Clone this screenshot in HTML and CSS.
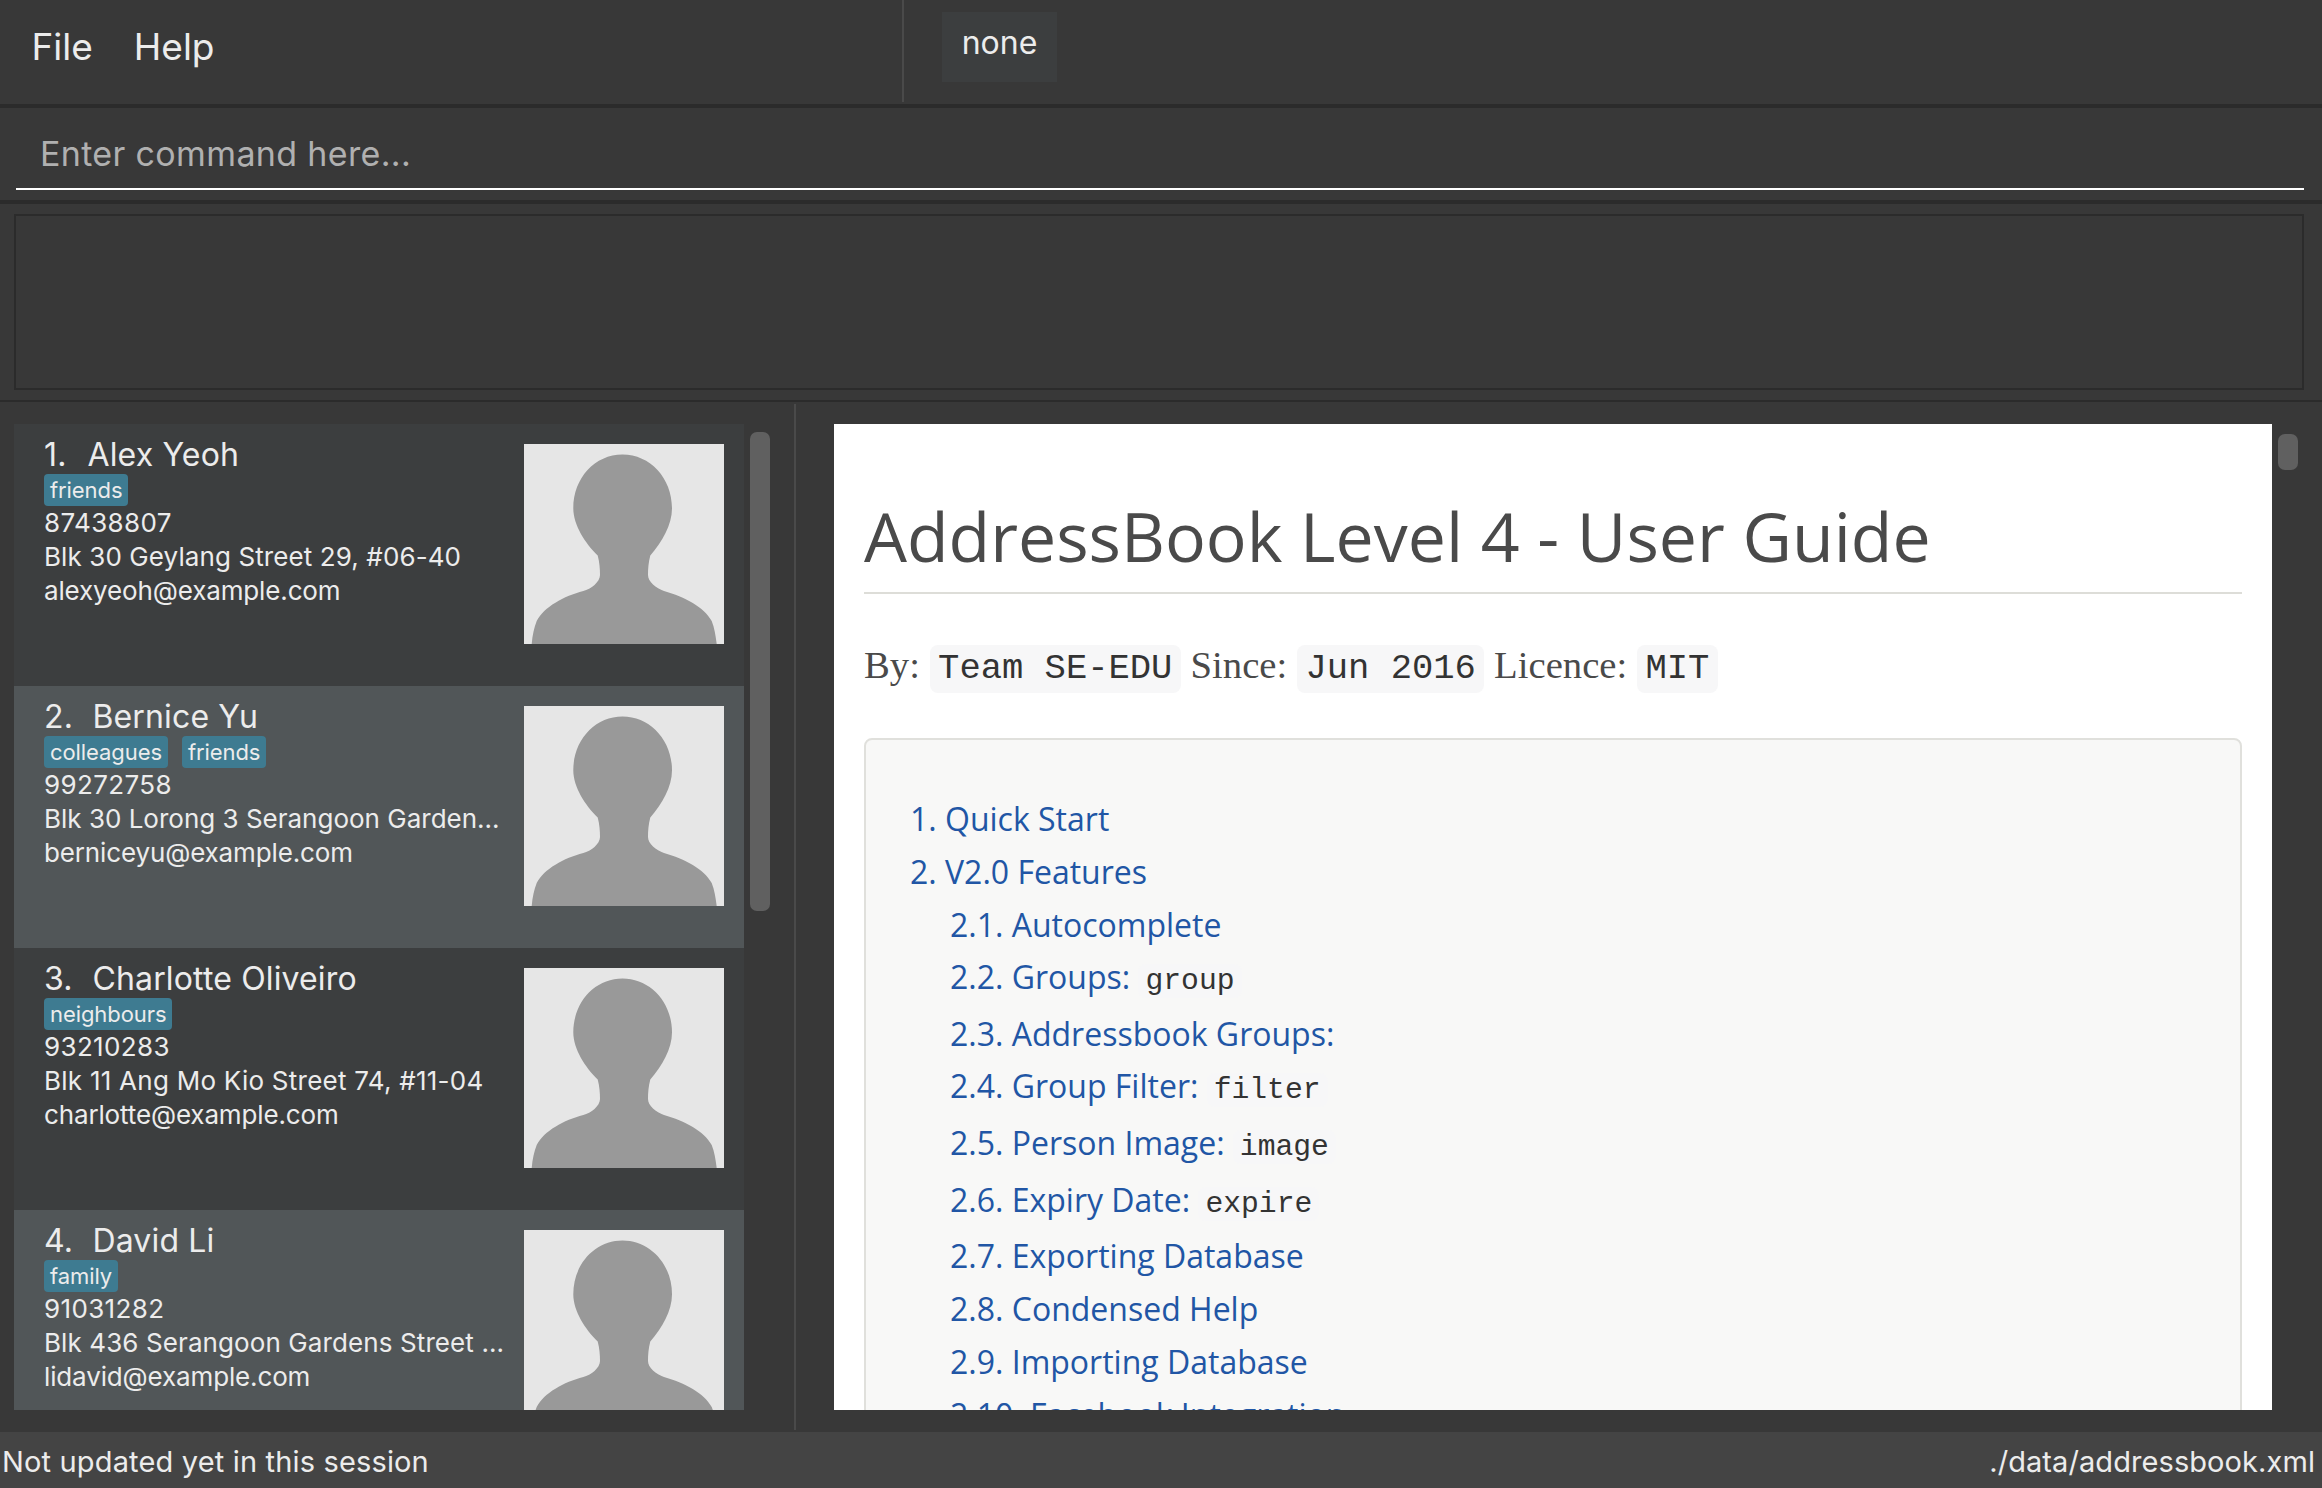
FILE: index.html
```html
<!DOCTYPE html>
<html lang="en">
<head>
<meta charset="utf-8">
<title>Address Book</title>
<link rel="stylesheet" href="styles.css">
</head>
<body>
<svg class="defs" width="0" height="0" aria-hidden="true">
  <symbol id="person" viewBox="0 0 200 200">
    <rect width="200" height="200" fill="#e6e6e6"/>
    <path fill="#999" d="M98.500 10.500C71 10.500 49.300 34 49.300 64.300C49.300 81 61 99 73.700 111.500C75.500 118 76 125 76 131C76 138 67 145 59.300 147C40 152 20 163 12.700 177C10 184 8.500 191 7.700 200H192.700C191.500 191 190.500 184 187.700 177C180 163 161 153 140 147C132 144 124 138 124 131C124 125 124.500 118 126.300 111.500C138 98 148 81 148 64.300C148 34 126 10.500 98.500 10.500Z"/>
  </symbol>
</svg>
<div class="app">
  <header class="topbar">
    <nav class="menu"><span class="menu-item">File</span><span class="menu-item menu-help">Help</span></nav>
    <div class="groups"><button class="group">none</button></div>
  </header>
  <section class="command"><div class="command-field"><span>Enter command here...</span></div></section>
  <section class="result"><div class="result-box"></div></section>
  <main class="main">
    <section class="list-pane">
      <div class="list">
        <article class="card">
          <div class="info"><h2 class="name"><span class="idx first">1.</span><span>Alex Yeoh</span></h2>
          <div class="tags"><span class="tag">friends</span></div>
          <p class="phone">87438807</p><p class="address">Blk 30 Geylang Street 29, #06-40</p><p class="email">alexyeoh@example.com</p></div>
          <svg class="photo"><use href="#person"/></svg>
        </article>
        <article class="card alt">
          <div class="info"><h2 class="name"><span class="idx">2.</span><span>Bernice Yu</span></h2>
          <div class="tags"><span class="tag">colleagues</span><span class="tag">friends</span></div>
          <p class="phone">99272758</p><p class="address long">Blk 30 Lorong 3 Serangoon Garden...</p><p class="email">berniceyu@example.com</p></div>
          <svg class="photo"><use href="#person"/></svg>
        </article>
        <article class="card">
          <div class="info"><h2 class="name"><span class="idx">3.</span><span>Charlotte Oliveiro</span></h2>
          <div class="tags"><span class="tag">neighbours</span></div>
          <p class="phone">93210283</p><p class="address wide">Blk 11 Ang Mo Kio Street 74, #11-04</p><p class="email">charlotte@example.com</p></div>
          <svg class="photo"><use href="#person"/></svg>
        </article>
        <article class="card alt">
          <div class="info"><h2 class="name"><span class="idx">4.</span><span>David Li</span></h2>
          <div class="tags"><span class="tag">family</span></div>
          <p class="phone">91031282</p><p class="address">Blk 436 Serangoon Gardens Street ...</p><p class="email">lidavid@example.com</p></div>
          <svg class="photo"><use href="#person"/></svg>
        </article>
      </div>
      <div class="scroll list-scroll"></div>
    </section>
    <div class="divider"></div>
    <section class="browser-pane">
      <div class="page">
        <h1>AddressBook Level 4 - User Guide</h1>
        <p class="byline">By: <code>Team SE-EDU</code> Since: <code>Jun 2016</code> Licence: <code>MIT</code></p>
        <div class="toc">
          <ul>
            <li>1. Quick Start</li>
            <li>2. V2.0 Features
              <ul>
                <li class="tight">2.1. Autocomplete</li>
                <li class="coded">2.2. Groups: <code>group</code></li>
                <li class="tight">2.3. Addressbook Groups:</li>
                <li class="coded">2.4. Group Filter: <code>filter</code></li>
                <li class="coded">2.5. Person Image: <code>image</code></li>
                <li class="coded last">2.6. Expiry Date: <code>expire</code></li>
                <li>2.7. Exporting Database</li>
                <li>2.8. Condensed Help</li>
                <li>2.9. Importing Database</li>
                <li>2.10. Facebook Integration</li>
              </ul>
            </li>
          </ul>
        </div>
      </div>
      <div class="scroll page-scroll"></div>
    </section>
  </main>
  <footer class="status"><span>Not updated yet in this session</span><span class="path">./data/addressbook.xml</span></footer>
</div>
</body>
</html>
```
FILE: styles.css
```css
* { box-sizing: border-box; }
body { margin: 0; background: #383838; color: #ececec; font-family: Inter, "Liberation Sans", sans-serif; }
h1, h2, p, ul { margin: 0; padding: 0; font-weight: 400; }
ul { list-style: none; }
.defs { display: block; height: 0; }
.app { width: 2322px; height: 1488px; display: flex; flex-direction: column; overflow: hidden; white-space: nowrap; }

.topbar { height: 108px; display: flex; border-bottom: 4px solid #2b2b2b; }
.menu { width: 904px; height: 102px; border-right: 2px solid #4a4a4a; padding-left: 31.500px; display: flex; line-height: 94px; font-size: 37px; }
.menu-help { margin-left: 41px; }
.groups { padding: 12px 0 0 38px; }
.group { display: block; width: 115px; height: 70px; border: 0; padding: 0 0 10px; background: #3c3e3f; color: #ececec; font: 32px Inter, sans-serif; }

.command { height: 96px; padding: 0 18px 0 16px; border-bottom: 4px solid #2b2b2b; }
.command-field { height: 82px; border-bottom: 2px solid #fff; padding-left: 24px; line-height: 91px; font-size: 34px; letter-spacing: .35px; color: #b0b0b0; }

.result { height: 198px; padding: 10px 18px 0 14px; border-bottom: 2px solid #2b2b2b; }
.result-box { height: 176px; border: 2px solid #2b2b2b; }

.main { height: 1030px; display: flex; }
.list-pane { width: 794px; padding: 22px 0 0 14px; display: flex; }
.list { width: 730px; height: 986px; overflow: hidden; }
.card { height: 262px; padding: 10px 20px 0 30px; display: flex; justify-content: space-between; background: #3c3e3f; }
.alt { background: #515658; }
.info { font-size: 26px; line-height: 34px; }
.name { height: 40px; display: flex; font-size: 32px; line-height: 42px; letter-spacing: .14px; }
.idx { width: 48.500px; }
.first { width: 43.500px; }
.tags { height: 32px; display: flex; gap: 14px; }
.tag { height: 32px; padding: 0 6px; border-radius: 4px; background: #3e7b91; font-size: 22px; line-height: 32px; letter-spacing: -.08px; }
.phone { letter-spacing: .35px; }
.address { letter-spacing: .1px; }
.long { letter-spacing: 0; }
.wide { letter-spacing: .25px; }
.email { letter-spacing: -.14px; }
.photo { width: 200px; height: 200px; margin-top: 10px; }
.scroll { width: 20px; border-radius: 7px; background: #606060; }
.list-scroll { height: 479px; margin: 8px 0 0 6px; }
.divider { width: 2px; height: 1026px; margin-top: 2px; background: #4a4a4a; }

.browser-pane { padding: 22px 0 0 38px; display: flex; }
.page { width: 1438px; height: 986px; padding: 0 30px; overflow: hidden; background: #fff; }
.page h1 { height: 170px; padding-top: 65px; border-bottom: 2px solid #ddddd8; color: #4a4a4a; font: 68px/94px "Open Sans", sans-serif; }
.byline { height: 144px; padding-top: 42px; color: #4a4a4a; font: 38.700px/58px "Liberation Serif", serif; }
.byline code { display: inline-block; height: 48px; padding: 0 8.500px; border-radius: 8px; background: #f7f7f8; color: #333; font: 35.500px/48px "Liberation Mono", monospace; }
.toc { height: 800px; padding: 52px 44px; border: 2px solid #e0e0dc; border-radius: 8px; background: #f8f8f7; color: #2156a5; font: 32px/53px "Open Sans", sans-serif; }
.toc ul ul { padding-left: 40px; }
.toc li li { height: 53px; }
.toc li.coded { height: 57px; }
.toc li.tight { height: 52px; }
.toc li.last { height: 56px; }
.toc code { padding: 0 7px; border-radius: 8px; background: #f7f7f8; color: #333; font: 29.700px/0 "Liberation Mono", monospace; }
.page-scroll { height: 36px; margin: 10px 0 0 6px; }

.status { height: 56px; padding: 0 7px 0 2px; display: flex; justify-content: space-between; background: #444; font-size: 29px; line-height: 60px; letter-spacing: .16px; }
.path { letter-spacing: .08px; }
```
